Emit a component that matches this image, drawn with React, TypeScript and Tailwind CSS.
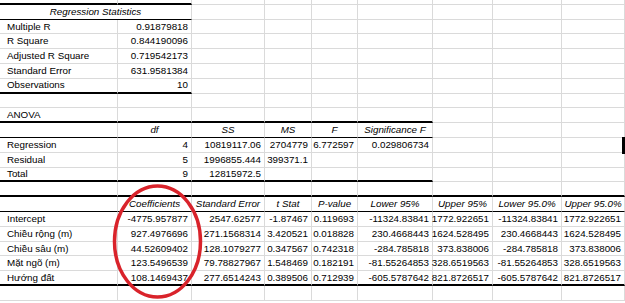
import React from 'react';

type Row = {
    cells: string[];
    header?: boolean;
    merge?: boolean;
    bottom?: 'thick' | 'thin';
    span?: number;
    short?: boolean;
};

const colWidths = [
    'w-[118px]',
    'w-[74px]',
    'w-[73px]',
    'w-[47px]',
    'w-[46px]',
    'w-[75px]',
    'w-[60px]',
    'w-[69px]',
    'w-[63px]',
];

const rows: Row[] = [
    { cells: [], short: true, bottom: 'thick', span: 2 },
    { cells: ['Regression Statistics'], header: true, merge: true, bottom: 'thin', span: 2 },
    { cells: ['Multiple R', '0.91879818'] },
    { cells: ['R Square', '0.844190096'] },
    { cells: ['Adjusted R Square', '0.719542173'] },
    { cells: ['Standard Error', '631.9581384'] },
    { cells: ['Observations', '10'], bottom: 'thick', span: 2 },
    { cells: [] },
    { cells: ['ANOVA'], bottom: 'thick', span: 6 },
    { cells: ['', 'df', 'SS', 'MS', 'F', 'Significance F'], header: true, bottom: 'thin', span: 6 },
    { cells: ['Regression', '4', '10819117.06', '2704779', '6.772597', '0.029806734'] },
    { cells: ['Residual', '5', '1996855.444', '399371.1'] },
    { cells: ['Total', '9', '12815972.5'], bottom: 'thick', span: 6 },
    { cells: [], bottom: 'thick', span: 9 },
    {
        cells: ['', 'Coefficients', 'Standard Error', 't Stat', 'P-value', 'Lower 95%', 'Upper 95%', 'Lower 95.0%', 'Upper 95.0%'],
        header: true,
        bottom: 'thin',
        span: 9,
    },
    { cells: ['Intercept', '-4775.957877', '2547.62577', '-1.87467', '0.119693', '-11324.83841', '1772.922651', '-11324.83841', '1772.922651'] },
    { cells: ['Chiều rộng (m)', '927.4976696', '271.1568314', '3.420521', '0.018828', '230.4668443', '1624.528495', '230.4668443', '1624.528495'] },
    { cells: ['Chiều sâu (m)', '44.52609402', '128.1079277', '0.347567', '0.742318', '-284.785818', '373.838006', '-284.785818', '373.838006'] },
    { cells: ['Mặt ngõ (m)', '123.5496539', '79.78827967', '1.548469', '0.182191', '-81.55264853', '328.6519563', '-81.55264853', '328.6519563'] },
    {
        cells: ['Hướng đất', '108.1469437', '277.6514243', '0.389506', '0.712939', '-605.5787642', '821.8726517', '-605.5787642', '821.8726517'],
        bottom: 'thick',
        span: 9,
    },
    { cells: [] },
];

const bottomClass = (row: Row, col: number) => {
    if (row.bottom && row.span !== undefined && col < row.span) {
        return row.bottom === 'thick' ? 'border-b-2 border-b-black' : 'border-b border-b-black';
    }
    return 'border-b border-b-[#dadada]';
};

const SheetRow: React.FC<{ row: Row }> = ({ row }) => {
    const height = row.short ? 'h-[4.8px]' : 'h-[14.8px]';

    if (row.merge) {
        return (
            <div className={`flex ${height}`}>
                <div className={`w-[192px] shrink-0 flex items-center justify-center italic border-r border-r-[#dadada] ${bottomClass(row, 0)}`}>
                    {row.cells[0]}
                </div>
                {colWidths.slice(2).map((w, i) => (
                    <div key={i} className={`${w} shrink-0 border-r border-r-[#dadada] ${bottomClass(row, i + 2)}`} />
                ))}
            </div>
        );
    }

    return (
        <div className={`flex ${height}`}>
            {colWidths.map((w, i) => {
                const text = row.cells[i] ?? '';
                let align = 'justify-end pr-[3px]';
                if (i === 0) align = 'justify-start pl-[7px]';
                if (row.header && i > 0) align = 'justify-center italic';
                return (
                    <div
                        key={i}
                        className={`${w} shrink-0 flex items-center whitespace-nowrap border-r border-r-[#dadada] ${align} ${bottomClass(row, i)}`}
                    >
                        {text}
                    </div>
                );
            })}
        </div>
    );
};

const App: React.FC = () => {
    return (
        <div
            className="relative w-[625px] h-[303px] overflow-hidden bg-white text-[9.8px] leading-none text-black"
            style={{ fontFamily: '"Liberation Sans", Arial, sans-serif' }}
        >
            {rows.map((row, i) => (
                <SheetRow key={i} row={row} />
            ))}

            {/* selected cell edge on the right */}
            <div className="absolute left-[622px] top-[137px] w-[3px] h-[17px] bg-black" />

            {/* hand-drawn red circle around the coefficients */}
            <svg className="absolute left-0 top-0 pointer-events-none" width="625" height="303" viewBox="0 0 625 303">
                <ellipse cx="157.5" cy="241.5" rx="43" ry="55.5" fill="none" stroke="#d9232b" strokeWidth="3.5" />
            </svg>
        </div>
    );
};

export default App;
